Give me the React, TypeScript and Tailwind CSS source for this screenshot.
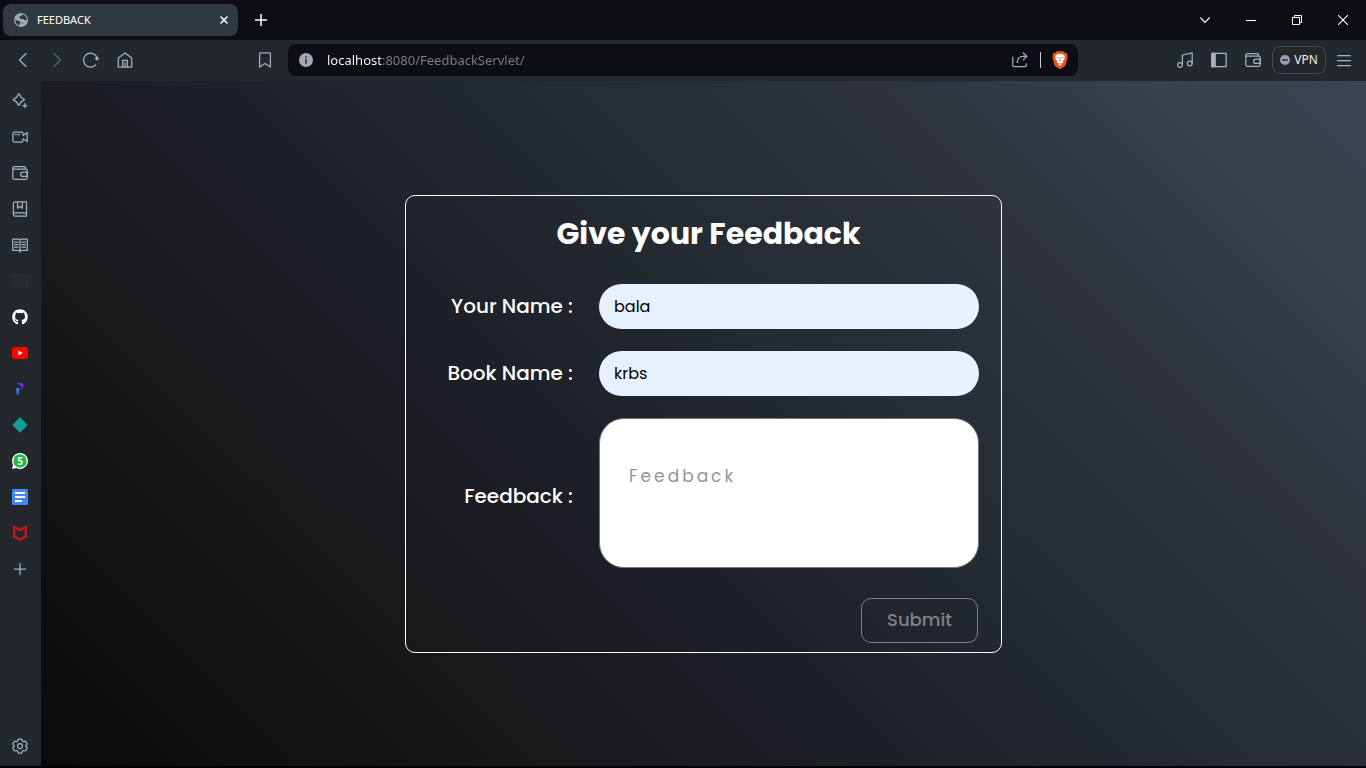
import { useState } from "react";
import type { ReactNode } from "react";
import { FaGithub } from "react-icons/fa";

type IconProps = { children: ReactNode; className?: string };

function Icon({ children, className = "" }: IconProps) {
  return (
    <svg
      viewBox="0 0 16 16"
      className={`size-4 shrink-0 ${className}`}
      fill="none"
      stroke="currentColor"
      strokeWidth="1.25"
      strokeLinecap="round"
      strokeLinejoin="round"
      aria-hidden="true"
    >
      {children}
    </svg>
  );
}

const Wallet = () => (
  <Icon>
    <path d="M.8 3.2v9.6c0 .9.6 1.5 1.5 1.5h11.4c.9 0 1.5-.6 1.5-1.5V5.6c0-.9-.6-1.5-1.5-1.5H2C1.200 4.100.8 3.600.8 3s.6-1.400 1.400-1.400h10c.8 0 1.300.6 1.300 1.300v1.100" />
    <path d="M15.200 7h-4.400a2.200 2.200 0 0 0 0 4.400h4.400z" />
  </Icon>
);

const Plus = () => (
  <Icon>
    <path d="M8 2.500v11M2.500 8h11" />
  </Icon>
);

const Globe = () => (
  <svg viewBox="0 0 14 14" className="size-3.5 shrink-0" aria-hidden="true">
    <circle cx="7" cy="7" r="7" fill="#a4a8b0" />
    <path
      d="M8.300 1.200 7.600 2.800l-2 .6-.3 1.700 1.600.9 2.600-.1 1.200 1.300 1.900.1.200-1.700-1.700-3.200zM1.200 6.200l2.700 1.900 2.300.4.300 1.500-1.300 1.300.1 1.500C3 12 1.200 9.600 1.200 6.200zM8 9.300l1.300.6-.9 1.300z"
      fill="#30393e"
    />
  </svg>
);

const Brave = () => (
  <svg viewBox="0 0 16 18" className="h-[18px] w-4 shrink-0" aria-hidden="true">
    <path
      d="M4.600.3h6.800l1.500 1.600 1.400-.2 1.200 1.700-.5 1.300.6 1.400-1.900 7.300c-.2.9-.7 1.500-1.400 2L8.700 17.700c-.4.300-1 .3-1.400 0l-3.600-2.300c-.7-.5-1.200-1.100-1.400-2L.4 6.100 1 4.700.5 3.400l1.200-1.700 1.400.2z"
      fill="#f1501b"
    />
    <path
      d="m8 3.100 2.200-.4 2.600 2.400-.3 1.200.4.900-2 2.700.3 1.300-1.300 1.100-1.200-.6L8 12.100l-.7-.4-1.200.6-1.300-1.100.3-1.300-2-2.700.4-.9-.3-1.200 2.600-2.400z"
      fill="#fff"
    />
    <path d="m5.900 13 2.100-.9 2.100.9L8 14.700z" fill="#fff" />
    <path
      d="M4.400 6.200 6.700 6.600l-.6.900zM11.600 6.200 9.300 6.600l.6.900zM7.600 6h.8l-.1 2.700.8.800-1.100.7-1.100-.7.800-.8z"
      fill="#f1501b"
    />
  </svg>
);

const sidebarItems: { label: string; icon: ReactNode }[] = [
  {
    label: "Leo AI",
    icon: (
      <Icon>
        <path d="M6.800.9c.5 0 .7.300.8.7.6 2.500 1.400 3.400 4 4.200.4.100.7.400.7.800s-.3.700-.7.800c-2.600.8-3.400 1.700-4 4.200-.1.400-.3.700-.8.700s-.7-.3-.8-.7c-.6-2.500-1.400-3.400-4-4.200-.4-.1-.7-.4-.7-.8s.3-.7.700-.8c2.600-.8 3.400-1.700 4-4.200.1-.4.300-.7.800-.7zM12.900 10.600v4M10.900 12.600h4" />
      </Icon>
    ),
  },
  {
    label: "Brave Talk",
    icon: (
      <Icon>
        <path d="M2.300 3h7.400c.8 0 1.400.600 1.400 1.400v2.200L15.200 3.400v9.200L11.100 9.800v1.800c0 .8-.6 1.400-1.400 1.400H2.300c-.8 0-1.400-.6-1.400-1.400V4.400C.9 3.600 1.500 3 2.300 3zM3.200 5.600h1.300M6.200 5.600h1.300" />
      </Icon>
    ),
  },
  { label: "Wallet", icon: <Wallet /> },
  {
    label: "Bookmarks",
    icon: (
      <Icon>
        <path d="M3 .9h11.500v14.200H3c-1 0-1.600-.7-1.600-1.600V2.500C1.400 1.500 2 .9 3 .9zM1.400 13.500c0-1 .7-1.600 1.600-1.600h11.500M5.500 1v6.200l2.400-1.900 2.400 1.900V1" />
      </Icon>
    ),
  },
  {
    label: "Reading list",
    icon: (
      <Icon>
        <path d="M8 2.800C7.400 2.200 6.800 2 6 2H.7v11.300H6c.9 0 1.500.3 2 .9.500-.6 1.100-.9 2-.9h5.300V2H10c-.8 0-1.400.2-2 .8zM8 2.800v12.400M2.600 5h3.500M2.600 7.600h3.500M2.600 10.200h3.500M9.900 5h3.500M9.900 7.600h3.500M9.900 10.200h3.500" />
      </Icon>
    ),
  },
  {
    label: "News",
    icon: (
      <Icon className="text-[#2c3235]">
        <path d="M.8 2.500h14.400v11H.8zM3 5.500h5M3 8h10M3 10.500h10" />
      </Icon>
    ),
  },
  { label: "GitHub", icon: <FaGithub className="size-4 text-white" aria-hidden="true" /> },
  {
    label: "YouTube",
    icon: (
      <svg viewBox="0 0 16 12" className="h-3 w-4" aria-hidden="true">
        <rect width="16" height="12" rx="2.500" fill="#f00" />
        <path d="M6.300 3.400v5.200L10.800 6z" fill="#fff" />
      </svg>
    ),
  },
  {
    label: "Pinned site",
    icon: (
      <svg viewBox="0 0 16 16" className="size-4" aria-hidden="true">
        <path d="M4.800 2h3.800c2 0 3.300 1.200 3.300 3.100L9.600 5.300C9.300 4.300 6.500 4 4.800 2z" fill="#8a28ec" />
        <path d="M11.900 5.100c0 2.600-2.300 3.900-5.100 4.200V7.400c1.500-.1 2.600-.8 2.800-2.100z" fill="#5c18d6" />
        <path d="M4.400 6.900h2.400v2.600L4.400 11.500z" fill="#18a8d8" />
        <path d="M6.800 9.300v3.200c0 1-.9 1.500-1.800 1.400l-.6-2.400z" fill="#3268f4" />
      </svg>
    ),
  },
  {
    label: "Pinned board",
    icon: (
      <svg viewBox="0 0 16 16" className="size-4" aria-hidden="true">
        <path d="M8 .8 15.200 8 8 15.200.8 8z" fill="#0aa39c" stroke="#0aa39c" strokeWidth="1" strokeLinejoin="round" />
      </svg>
    ),
  },
  {
    label: "WhatsApp",
    icon: (
      <span className="relative grid size-4 place-items-center">
        <svg viewBox="0 0 16 16" className="absolute inset-0 size-4" aria-hidden="true">
          <path d="M8 0a8 8 0 1 1-3.700 15.100L0 16l1-4.100A8 8 0 0 1 8 0z" fill="#fff" />
          <circle cx="8" cy="8" r="6.700" fill="#22b845" />
        </svg>
        <span className="relative text-[10px] leading-4 font-bold text-white">5</span>
      </span>
    ),
  },
  {
    label: "Docs",
    icon: (
      <svg viewBox="0 0 16 16" className="size-4" aria-hidden="true">
        <rect width="16" height="16" rx="1.500" fill="#4685f4" />
        <path d="M3 4h10M3 8h10M3 12h7" stroke="#fff" strokeWidth="2" />
      </svg>
    ),
  },
  {
    label: "McAfee",
    icon: (
      <svg viewBox="0 0 16 16" className="size-4" aria-hidden="true">
        <path
          d="M2.200 2.300 8 5l5.800-2.700v9.300L8 14.400l-5.800-2.800z"
          fill="none"
          stroke="#c01818"
          strokeWidth="2.600"
        />
      </svg>
    ),
  },
  { label: "Add to sidebar", icon: <Plus /> },
];

function ToolButton({ label, children, className = "" }: { label: string; children: ReactNode; className?: string }) {
  return (
    <button
      type="button"
      aria-label={label}
      className={`grid h-8 w-[34px] shrink-0 place-items-center ${className}`}
    >
      {children}
    </button>
  );
}

function TabStrip() {
  return (
    <header className="flex h-10 shrink-0 items-center bg-[#0d0e13] pl-[3px] text-white">
      <div className="flex h-8 w-[235px] items-center rounded-lg bg-[#30393e] pr-1.5 pl-[11px]">
        <Globe />
        <span className="ml-[9px] flex-1 text-[11px]">FEEDBACK</span>
        <button type="button" aria-label="Close tab" className="grid size-4 place-items-center">
          <svg viewBox="0 0 8 8" className="size-2" stroke="currentColor" strokeWidth="1.500" aria-hidden="true">
            <path d="m.5.5 7 7M7.500.5l-7 7" />
          </svg>
        </button>
      </div>
      <button type="button" aria-label="New tab" className="ml-[7px] grid size-8 place-items-center">
        <svg viewBox="0 0 12 12" className="size-3" stroke="currentColor" strokeWidth="1.500" aria-hidden="true">
          <path d="M6 0v12M0 6h12" />
        </svg>
      </button>
      <div className="ml-auto flex">
        <button type="button" aria-label="Search tabs" className="grid h-10 w-[46px] place-items-center">
          <svg viewBox="0 0 10 10" className="size-2.5" fill="none" stroke="currentColor" strokeWidth="1.100" aria-hidden="true">
            <path d="m.3 2.500 4.700 5 4.700-5" />
          </svg>
        </button>
        <button type="button" aria-label="Minimize" className="grid h-10 w-[46px] place-items-center">
          <svg viewBox="0 0 10 10" className="size-2.5" stroke="currentColor" aria-hidden="true">
            <path d="M0 5.500h10" />
          </svg>
        </button>
        <button type="button" aria-label="Restore" className="grid h-10 w-[46px] place-items-center">
          <svg viewBox="0 0 10 10" className="size-2.5" fill="none" stroke="currentColor" aria-hidden="true">
            <path d="M.5 2.500h7v7h-7zM2.500 2.500v-2h7v7h-2" />
          </svg>
        </button>
        <button type="button" aria-label="Close window" className="grid h-10 w-[46px] place-items-center">
          <svg viewBox="0 0 10 10" className="size-2.5" stroke="currentColor" strokeWidth="1.100" aria-hidden="true">
            <path d="m0 0 10 10M10 0 0 10" />
          </svg>
        </button>
      </div>
    </header>
  );
}

function Toolbar() {
  const [url, setUrl] = useState("localhost:8080/FeedbackServlet/");
  return (
    <div className="flex h-[41px] shrink-0 items-center bg-[#22282c] pb-px text-[#a3b2b9]">
      <div className="flex w-72 shrink-0 items-center pr-1.5 pl-1.5">
        <ToolButton label="Back">
          <Icon><path d="M11 1.500 4.500 8l6.500 6.500" /></Icon>
        </ToolButton>
        <ToolButton label="Forward" className="text-[#596268]">
          <Icon><path d="m5 1.500 6.500 6.500L5 14.500" /></Icon>
        </ToolButton>
        <ToolButton label="Reload">
          <Icon>
            <path d="M12.600 13A7 7 0 1 1 14.200 5.700" />
            <circle cx="14" cy="6.600" r="1.800" fill="currentColor" stroke="none" />
          </Icon>
        </ToolButton>
        <ToolButton label="Home">
          <Icon><path d="M1.300 6 8 .9 14.700 6v9.100H1.300zM5.600 15V8.400h4.800V15M8 10.500V15" /></Icon>
        </ToolButton>
        <ToolButton label="Bookmark this page" className="ml-auto">
          <Icon><path d="M3.300.9h9.400c.4 0 .7.300.7.7v13.500L8 11.600l-5.400 3.500V1.600c0-.4.300-.7.700-.7z" /></Icon>
        </ToolButton>
      </div>

      <div className="flex h-8 min-w-0 flex-1 items-center rounded-lg bg-[#0d0e13] pr-2.5 pl-[11px]">
        <svg viewBox="0 0 14 14" className="size-3.5 shrink-0" aria-hidden="true">
          <circle cx="7" cy="7" r="7" fill="#a4a8b0" />
          <path d="M6.200 3.200h1.600v1.500H6.200zM6.200 6h1.600v4.800H6.200z" fill="#30343a" />
        </svg>
        <input
          type="text"
          aria-label="Address"
          value={url}
          onChange={(e) => setUrl(e.target.value)}
          className="ml-3.5 min-w-0 flex-1 bg-[linear-gradient(to_right,#fff_55px,#7d8084_55px)] bg-clip-text text-[13px] leading-5 text-transparent caret-white outline-none"
        />
        <button type="button" aria-label="Share" className="grid size-6 place-items-center">
          <Icon><path d="M.8 5v8.500c0 .7.500 1.200 1.200 1.200h11c.7 0 1.200-.5 1.200-1.200v-1.700M11.300 1l3.700 3.400-3.700 3.500M14.800 4.400H11c-3.300 0-5.400 2-5.800 6" /></Icon>
        </button>
        <span className="mx-2 h-4 w-px bg-[#c8cbd0]" />
        <button type="button" aria-label="Brave Shields" className="ml-[3px] grid place-items-center">
          <Brave />
        </button>
      </div>

      <div className="flex w-72 shrink-0 items-center justify-end pr-[5px]">
        <ToolButton label="Media controls">
          <Icon>
            <circle cx="3" cy="13" r="2.400" />
            <circle cx="12.800" cy="11.500" r="2.400" />
            <path d="M5.400 13V3l9.800-2.200v10.700" />
          </Icon>
        </ToolButton>
        <ToolButton label="Show sidebar">
          <Icon>
            <rect x=".8" y="1.300" width="14.400" height="13.400" rx=".5" />
            <path d="M.8 1.300h3.400v13.400H.8z" fill="currentColor" />
          </Icon>
        </ToolButton>
        <ToolButton label="Wallet"><Wallet /></ToolButton>
        <button
          type="button"
          className="ml-0.5 flex h-7 w-[54px] items-center justify-center gap-1 rounded-lg border border-[#434b50] text-xs text-[#eceef0]"
        >
          <svg viewBox="0 0 10 10" className="size-2.5" aria-hidden="true">
            <circle cx="5" cy="5" r="5" fill="#9a9cb2" />
            <path d="M2.200 5h5.600" stroke="#22282c" strokeWidth="1.500" />
          </svg>
          VPN
        </button>
        <ToolButton label="Menu" className="ml-px">
          <Icon><path d="M1.500 3.500h13M1.500 8.500h13M1.500 13.500h13" /></Icon>
        </ToolButton>
      </div>
    </div>
  );
}

function Sidebar() {
  return (
    <nav aria-label="Sidebar" className="flex w-[41px] shrink-0 flex-col bg-[#22282c] pt-0.5 pr-px pb-0.5 text-[#a3b2b9]">
      {sidebarItems.map((item) => (
        <button key={item.label} type="button" aria-label={item.label} className="grid h-9 place-items-center">
          {item.icon}
        </button>
      ))}
      <button type="button" aria-label="Sidebar settings" className="mt-auto grid h-9 place-items-center">
        <Icon>
          <path d="M6.300 1h3.400l.7 2 1.100.6 2.100-.4 1.700 2.900L13.900 7.500v1l1.400 1.500-1.700 2.900-2.100-.4-1.100.6-.7 2H6.300l-.7-2-1.100-.6-2.100.4L.7 10l1.400-1.500v-1L.7 6.100l1.700-2.900 2.100.4L5.600 3z" />
          <circle cx="8" cy="8" r="2.500" />
        </Icon>
      </button>
    </nav>
  );
}

const labelClass = "text-right text-[20px] leading-7 font-medium text-white";
const inputClass =
  "h-[45px] w-full rounded-full bg-[#e8f0fe] px-[15px] text-base text-black outline-none";

function FeedbackForm() {
  const [name, setName] = useState("bala");
  const [book, setBook] = useState("krbs");
  const [feedback, setFeedback] = useState("");

  return (
    <form
      onSubmit={(e) => e.preventDefault()}
      className="w-full max-w-[597px] rounded-[10px] border border-white px-[22px] pt-4 pb-[9px] font-['Poppins','Inter',sans-serif]"
    >
      <h1 className="pl-2.5 text-center text-[30px] leading-[44px] font-bold text-white">Give your Feedback</h1>
      <div className="mt-7 grid grid-cols-[1fr_380px] items-center gap-x-[26px] gap-y-[22px]">
        <label htmlFor="name" className={labelClass}>Your Name :</label>
        <input id="name" type="text" value={name} onChange={(e) => setName(e.target.value)} className={inputClass} />
        <label htmlFor="book" className={labelClass}>Book Name :</label>
        <input id="book" type="text" value={book} onChange={(e) => setBook(e.target.value)} className={inputClass} />
        <label htmlFor="feedback" className={`pt-1.5 ${labelClass}`}>Feedback :</label>
        <textarea
          id="feedback"
          placeholder="Feedback"
          value={feedback}
          onChange={(e) => setFeedback(e.target.value)}
          className="h-[150px] w-full resize-none rounded-[25px] border border-[#767676] bg-white px-[29px] pt-[45px] text-[17px] leading-6 tracking-[3px] text-black outline-none placeholder:text-[#949494]"
        />
      </div>
      <div className="mt-[30px] flex justify-end pr-px">
        <button
          type="submit"
          disabled={feedback === ""}
          className="h-[45px] w-[117px] rounded-[10px] border border-[#808285] text-lg font-medium text-[#808285]"
        >
          Submit
        </button>
      </div>
    </form>
  );
}

export default function App() {
  return (
    <div className="flex min-h-screen flex-col border-b-2 border-black bg-[#0d0e13] font-['Noto_Sans',sans-serif]">
      <TabStrip />
      <Toolbar />
      <div className="flex flex-1">
        <Sidebar />
        <main className="flex flex-1 items-center justify-center bg-[linear-gradient(45deg,#0a0a0a_0%,#16181a_25%,#1d2027_42%,#252b32_58%,#2e333e_76%,#38424d_91%,#3b4454_100%)]">
          <FeedbackForm />
        </main>
      </div>
    </div>
  );
}
